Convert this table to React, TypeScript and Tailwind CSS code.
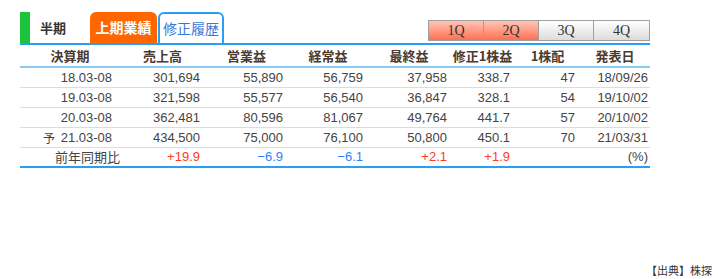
const rows = [
  { p: "18.03-08", s: "301,694", o: "55,890", k: "56,759", f: "37,958", e: "338.7", d: "47", dt: "18/09/26" },
  { p: "19.03-08", s: "321,598", o: "55,577", k: "56,540", f: "36,847", e: "328.1", d: "54", dt: "19/10/02" },
  { p: "20.03-08", s: "362,481", o: "80,596", k: "81,067", f: "49,764", e: "441.7", d: "57", dt: "20/10/02" },
  { p: "21.03-08", s: "434,500", o: "75,000", k: "76,100", f: "50,800", e: "450.1", d: "70", dt: "21/03/31", yo: true },
];

const heads = ["決算期", "売上高", "営業益", "経常益", "最終益", "修正1株益", "1株配", "発表日"];
const widths = ["w-[100px]", "w-[85px]", "w-[83px]", "w-[80px]", "w-[82px]", "w-[65px]", "w-[65px]", "w-[70px]"];

function QBtn({ label, on }: { label: string; on: boolean }) {
  return (
    <div
      className={
        "w-[55px] h-full flex items-center justify-center border-r border-[#a0a0a0] last:border-r-0 text-[14px] text-[#333] " +
        (on
          ? "bg-gradient-to-b from-[#ffc4b4] to-[#ff6e52]"
          : "bg-gradient-to-b from-[#ffffff] to-[#dcdcdc]")
      }
      style={{ fontFamily: '"Liberation Serif", "DejaVu Serif", serif' }}
    >
      {label}
    </div>
  );
}

export default function App() {
  const jp = { fontFamily: '"Noto Sans CJK JP", "DejaVu Sans", sans-serif' };
  const num = { fontFamily: '"Liberation Sans", "Noto Sans CJK JP", sans-serif' };
  return (
    <div className="w-[718px] h-[279px] bg-white relative" style={jp}>
      <div className="pt-[12px] pl-[20px] w-[650px]">
        <div className="flex items-end h-[33px] border-b-2 border-[#2a9df4]">
          <div className="w-[10px] h-full bg-[#1cc43c]" />
          <div className="w-[60px] h-full flex items-center pl-[10px] text-[13px] font-bold text-[#333]">
            半期
          </div>
          <div className="w-[67px] h-full flex items-center justify-center bg-[#ff6600] rounded-t-[6px] text-white text-[14px] font-bold">
            上期業績
          </div>
          <div className="ml-[1px] w-[66px] h-full flex items-center justify-center border-2 border-b-0 border-[#2a9df4] rounded-t-[6px] text-[#3a78d8] text-[14px]">
            修正履歴
          </div>
          <div className="flex-1" />
          <div className="flex h-[21px] mb-[2px] border border-[#a0a0a0]">
            <QBtn label="1Q" on />
            <QBtn label="2Q" on />
            <QBtn label="3Q" on={false} />
            <QBtn label="4Q" on={false} />
          </div>
        </div>

        <div className="flex h-[23px] items-center border-b-2 border-[#8ccaf6] text-[13px] font-bold text-[#4a3a30]">
          {heads.map((h, i) => (
            <div key={h} className={widths[i] + " text-center"}>
              {h}
            </div>
          ))}
        </div>

        {rows.map((r) => (
          <div key={r.p} className="flex h-[20px] items-center border-b border-[#dcdcdc] text-[13px] text-[#444]" style={num}>
            <div className={widths[0] + " flex items-center pl-[23px] pr-[8px]"}>
              <span className="w-[14px] text-[12px]" style={jp}>{r.yo ? "予" : ""}</span>
              <span className="flex-1 text-right">{r.p}</span>
            </div>
            <div className={widths[1] + " text-right pr-[5px]"}>{r.s}</div>
            <div className={widths[2] + " text-right pr-[5px]"}>{r.o}</div>
            <div className={widths[3] + " text-right pr-[5px]"}>{r.k}</div>
            <div className={widths[4] + " text-right pr-[3px]"}>{r.f}</div>
            <div className={widths[5] + " text-right pr-[5px]"}>{r.e}</div>
            <div className={widths[6] + " text-right pr-[5px]"}>{r.d}</div>
            <div className={widths[7] + " text-right pr-[2px]"}>{r.dt}</div>
          </div>
        ))}

        <div className="flex h-[20px] items-center border-b-2 border-[#2a9df4] text-[13px]" style={num}>
          <div className={widths[0] + " text-right pr-[0px] text-[#444]"} style={jp}>前年同期比</div>
          <div className={widths[1] + " text-right pr-[5px] text-[#ff3b1f]"}>+19.9</div>
          <div className={widths[2] + " text-right pr-[5px] text-[#2f7fff]"}>−6.9</div>
          <div className={widths[3] + " text-right pr-[5px] text-[#2f7fff]"}>−6.1</div>
          <div className={widths[4] + " text-right pr-[3px] text-[#ff3b1f]"}>+2.1</div>
          <div className={widths[5] + " text-right pr-[5px] text-[#ff3b1f]"}>+1.9</div>
          <div className={widths[6]} />
          <div className={widths[7] + " text-right pr-[2px] text-[#444]"}>(%)</div>
        </div>
      </div>

      <div className="absolute right-[6px] bottom-[1px] text-[11px] text-[#333]">【出典】株探</div>
    </div>
  );
}
